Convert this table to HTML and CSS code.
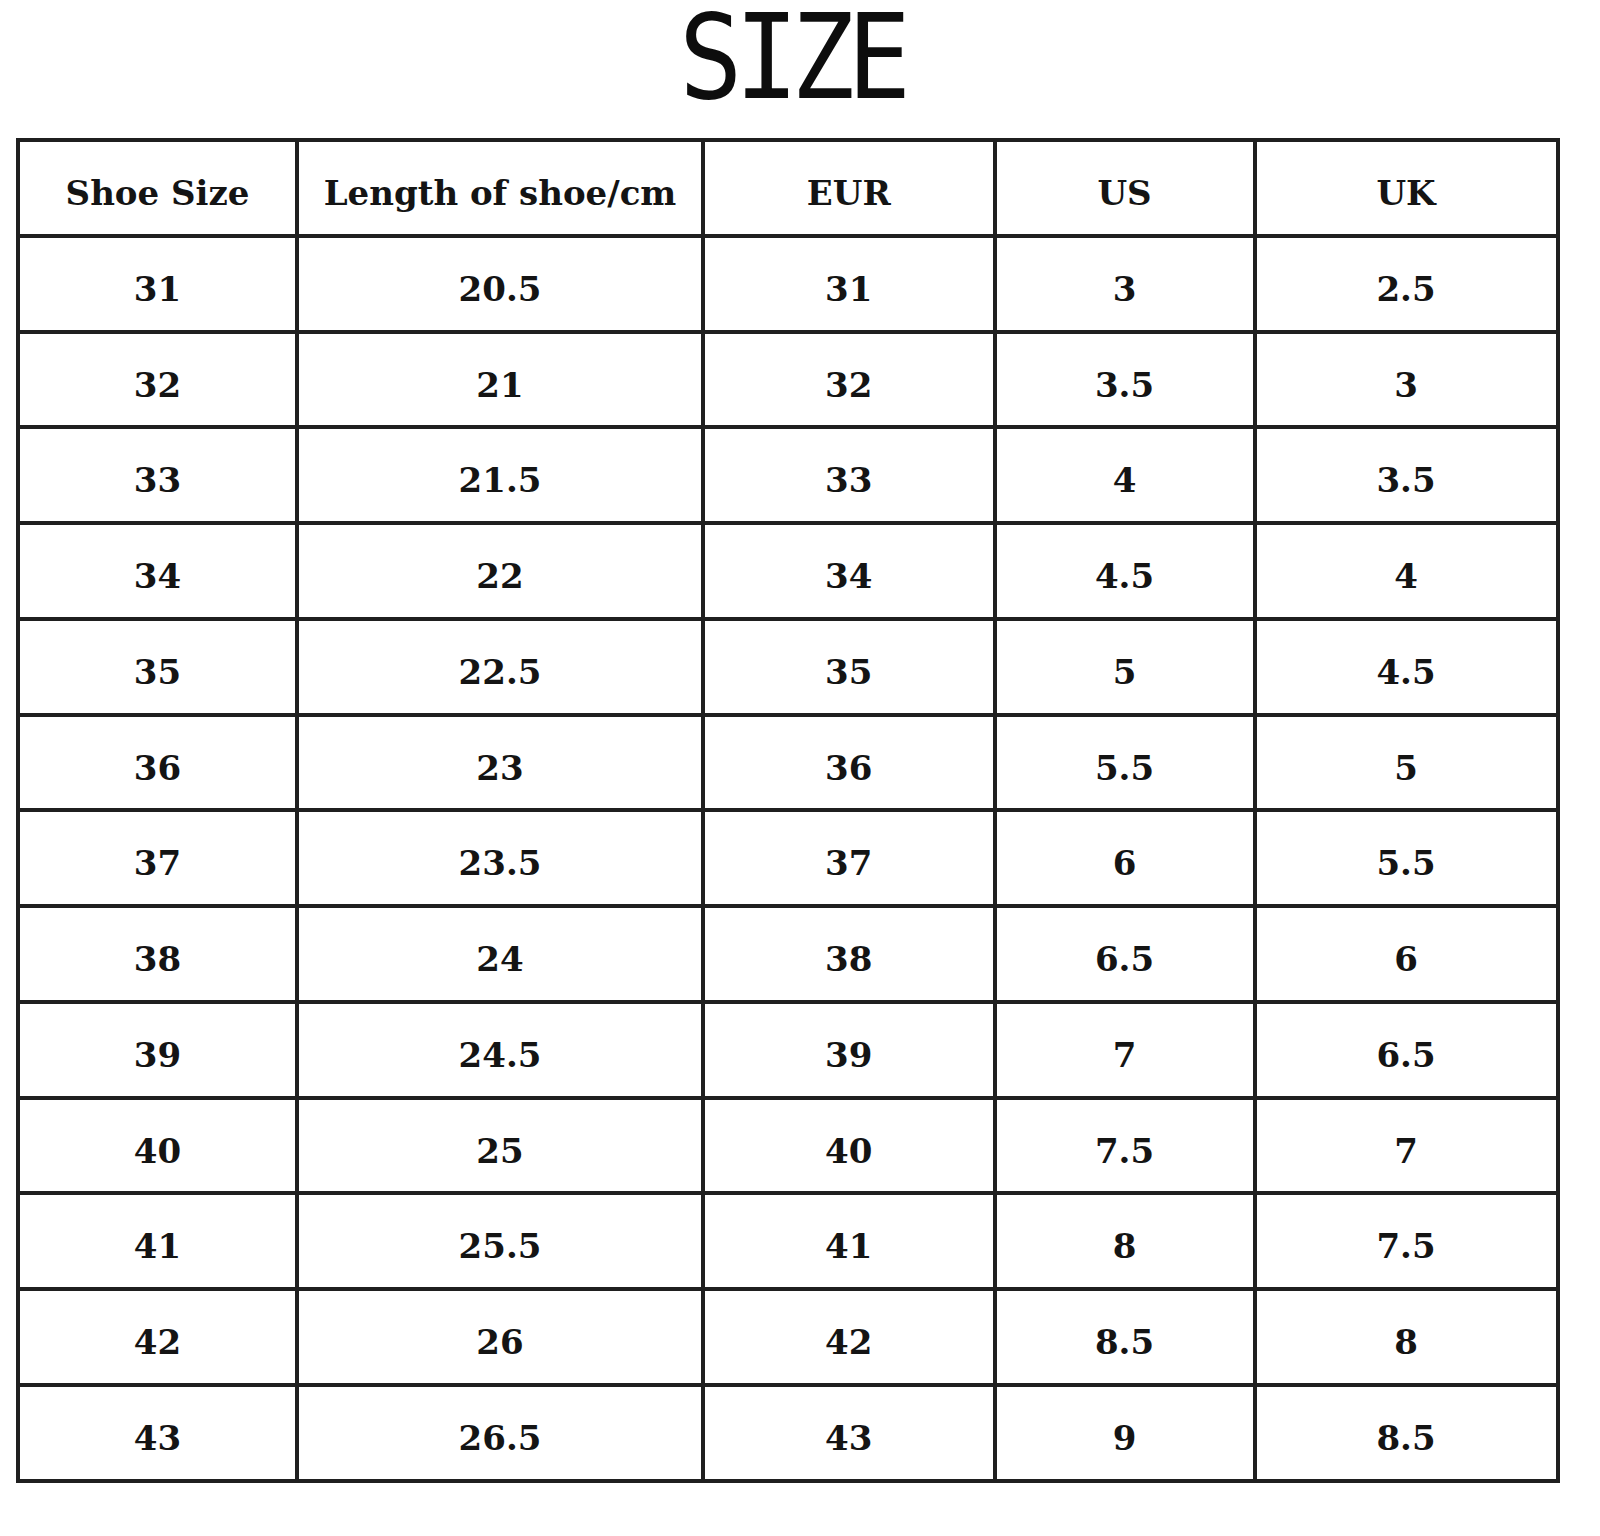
FILE: index.html
```html
<!DOCTYPE html>
<html lang="en">
<head>
<meta charset="utf-8">
<title>SIZE</title>
<link rel="stylesheet" href="styles.css">
</head>
<body>
<div class="sheet">
  <h1 class="title"><span class="title-text">SIZE</span></h1>
  <div class="chart">
    <div class="cell head"><span class="txt">Shoe Size</span></div>
    <div class="cell head"><span class="txt">Length of shoe/cm</span></div>
    <div class="cell head"><span class="txt">EUR</span></div>
    <div class="cell head"><span class="txt">US</span></div>
    <div class="cell head"><span class="txt">UK</span></div>

    <div class="cell"><span class="txt">31</span></div><div class="cell"><span class="txt">20.5</span></div><div class="cell"><span class="txt">31</span></div><div class="cell"><span class="txt">3</span></div><div class="cell"><span class="txt">2.5</span></div>
    <div class="cell"><span class="txt">32</span></div><div class="cell"><span class="txt">21</span></div><div class="cell"><span class="txt">32</span></div><div class="cell"><span class="txt">3.5</span></div><div class="cell"><span class="txt">3</span></div>
    <div class="cell"><span class="txt">33</span></div><div class="cell"><span class="txt">21.5</span></div><div class="cell"><span class="txt">33</span></div><div class="cell"><span class="txt">4</span></div><div class="cell"><span class="txt">3.5</span></div>
    <div class="cell"><span class="txt">34</span></div><div class="cell"><span class="txt">22</span></div><div class="cell"><span class="txt">34</span></div><div class="cell"><span class="txt">4.5</span></div><div class="cell"><span class="txt">4</span></div>
    <div class="cell"><span class="txt">35</span></div><div class="cell"><span class="txt">22.5</span></div><div class="cell"><span class="txt">35</span></div><div class="cell"><span class="txt">5</span></div><div class="cell"><span class="txt">4.5</span></div>
    <div class="cell"><span class="txt">36</span></div><div class="cell"><span class="txt">23</span></div><div class="cell"><span class="txt">36</span></div><div class="cell"><span class="txt">5.5</span></div><div class="cell"><span class="txt">5</span></div>
    <div class="cell"><span class="txt">37</span></div><div class="cell"><span class="txt">23.5</span></div><div class="cell"><span class="txt">37</span></div><div class="cell"><span class="txt">6</span></div><div class="cell"><span class="txt">5.5</span></div>
    <div class="cell"><span class="txt">38</span></div><div class="cell"><span class="txt">24</span></div><div class="cell"><span class="txt">38</span></div><div class="cell"><span class="txt">6.5</span></div><div class="cell"><span class="txt">6</span></div>
    <div class="cell"><span class="txt">39</span></div><div class="cell"><span class="txt">24.5</span></div><div class="cell"><span class="txt">39</span></div><div class="cell"><span class="txt">7</span></div><div class="cell"><span class="txt">6.5</span></div>
    <div class="cell"><span class="txt">40</span></div><div class="cell"><span class="txt">25</span></div><div class="cell"><span class="txt">40</span></div><div class="cell"><span class="txt">7.5</span></div><div class="cell"><span class="txt">7</span></div>
    <div class="cell"><span class="txt">41</span></div><div class="cell"><span class="txt">25.5</span></div><div class="cell"><span class="txt">41</span></div><div class="cell"><span class="txt">8</span></div><div class="cell"><span class="txt">7.5</span></div>
    <div class="cell"><span class="txt">42</span></div><div class="cell"><span class="txt">26</span></div><div class="cell"><span class="txt">42</span></div><div class="cell"><span class="txt">8.5</span></div><div class="cell"><span class="txt">8</span></div>
    <div class="cell"><span class="txt">43</span></div><div class="cell"><span class="txt">26.5</span></div><div class="cell"><span class="txt">43</span></div><div class="cell"><span class="txt">9</span></div><div class="cell"><span class="txt">8.5</span></div>
  </div>
</div>
</body>
</html>
```

FILE: styles.css
```css
html, body {
  margin: 0;
  padding: 0;
  background: #ffffff;
}

.sheet {
  width: 1600px;
  height: 1536px;
  box-sizing: border-box;
  padding-left: 16px;
  color: #111111;
}

.title {
  display: flex;
  justify-content: center;
  width: 1544px;
  height: 115px;
  margin: 0 0 23px 0;
  padding-left: 14px;
  box-sizing: border-box;
  font-family: "DejaVu Sans Mono", monospace;
  font-weight: normal;
  font-size: 117px;
  line-height: 115px;
  color: #0d0d0d;
}

.title-text {
  display: block;
  flex: none;
  padding: 0 10px 0 2px;
  white-space: nowrap;
  letter-spacing: -8px;
  transform: scaleX(0.9);
}

.chart {
  display: grid;
  grid-template-columns: 279px 406px 291.5px 260px 303px;
  grid-template-rows: repeat(14, 95.75px);
  width: max-content;
  border-left: 4px solid #1f1f1f;
  border-top: 4px solid #1f1f1f;
}

.cell {
  box-sizing: border-box;
  border-right: 4px solid #1f1f1f;
  border-bottom: 4px solid #1f1f1f;
  display: flex;
  align-items: center;
  justify-content: center;
  padding-top: 12px;
}

.txt {
  display: block;
  flex: none;
  white-space: nowrap;
  font-family: "DejaVu Serif", "Liberation Serif", serif;
  font-weight: bold;
  font-size: 34px;
  line-height: 1.164;
  color: #141414;
}
```
